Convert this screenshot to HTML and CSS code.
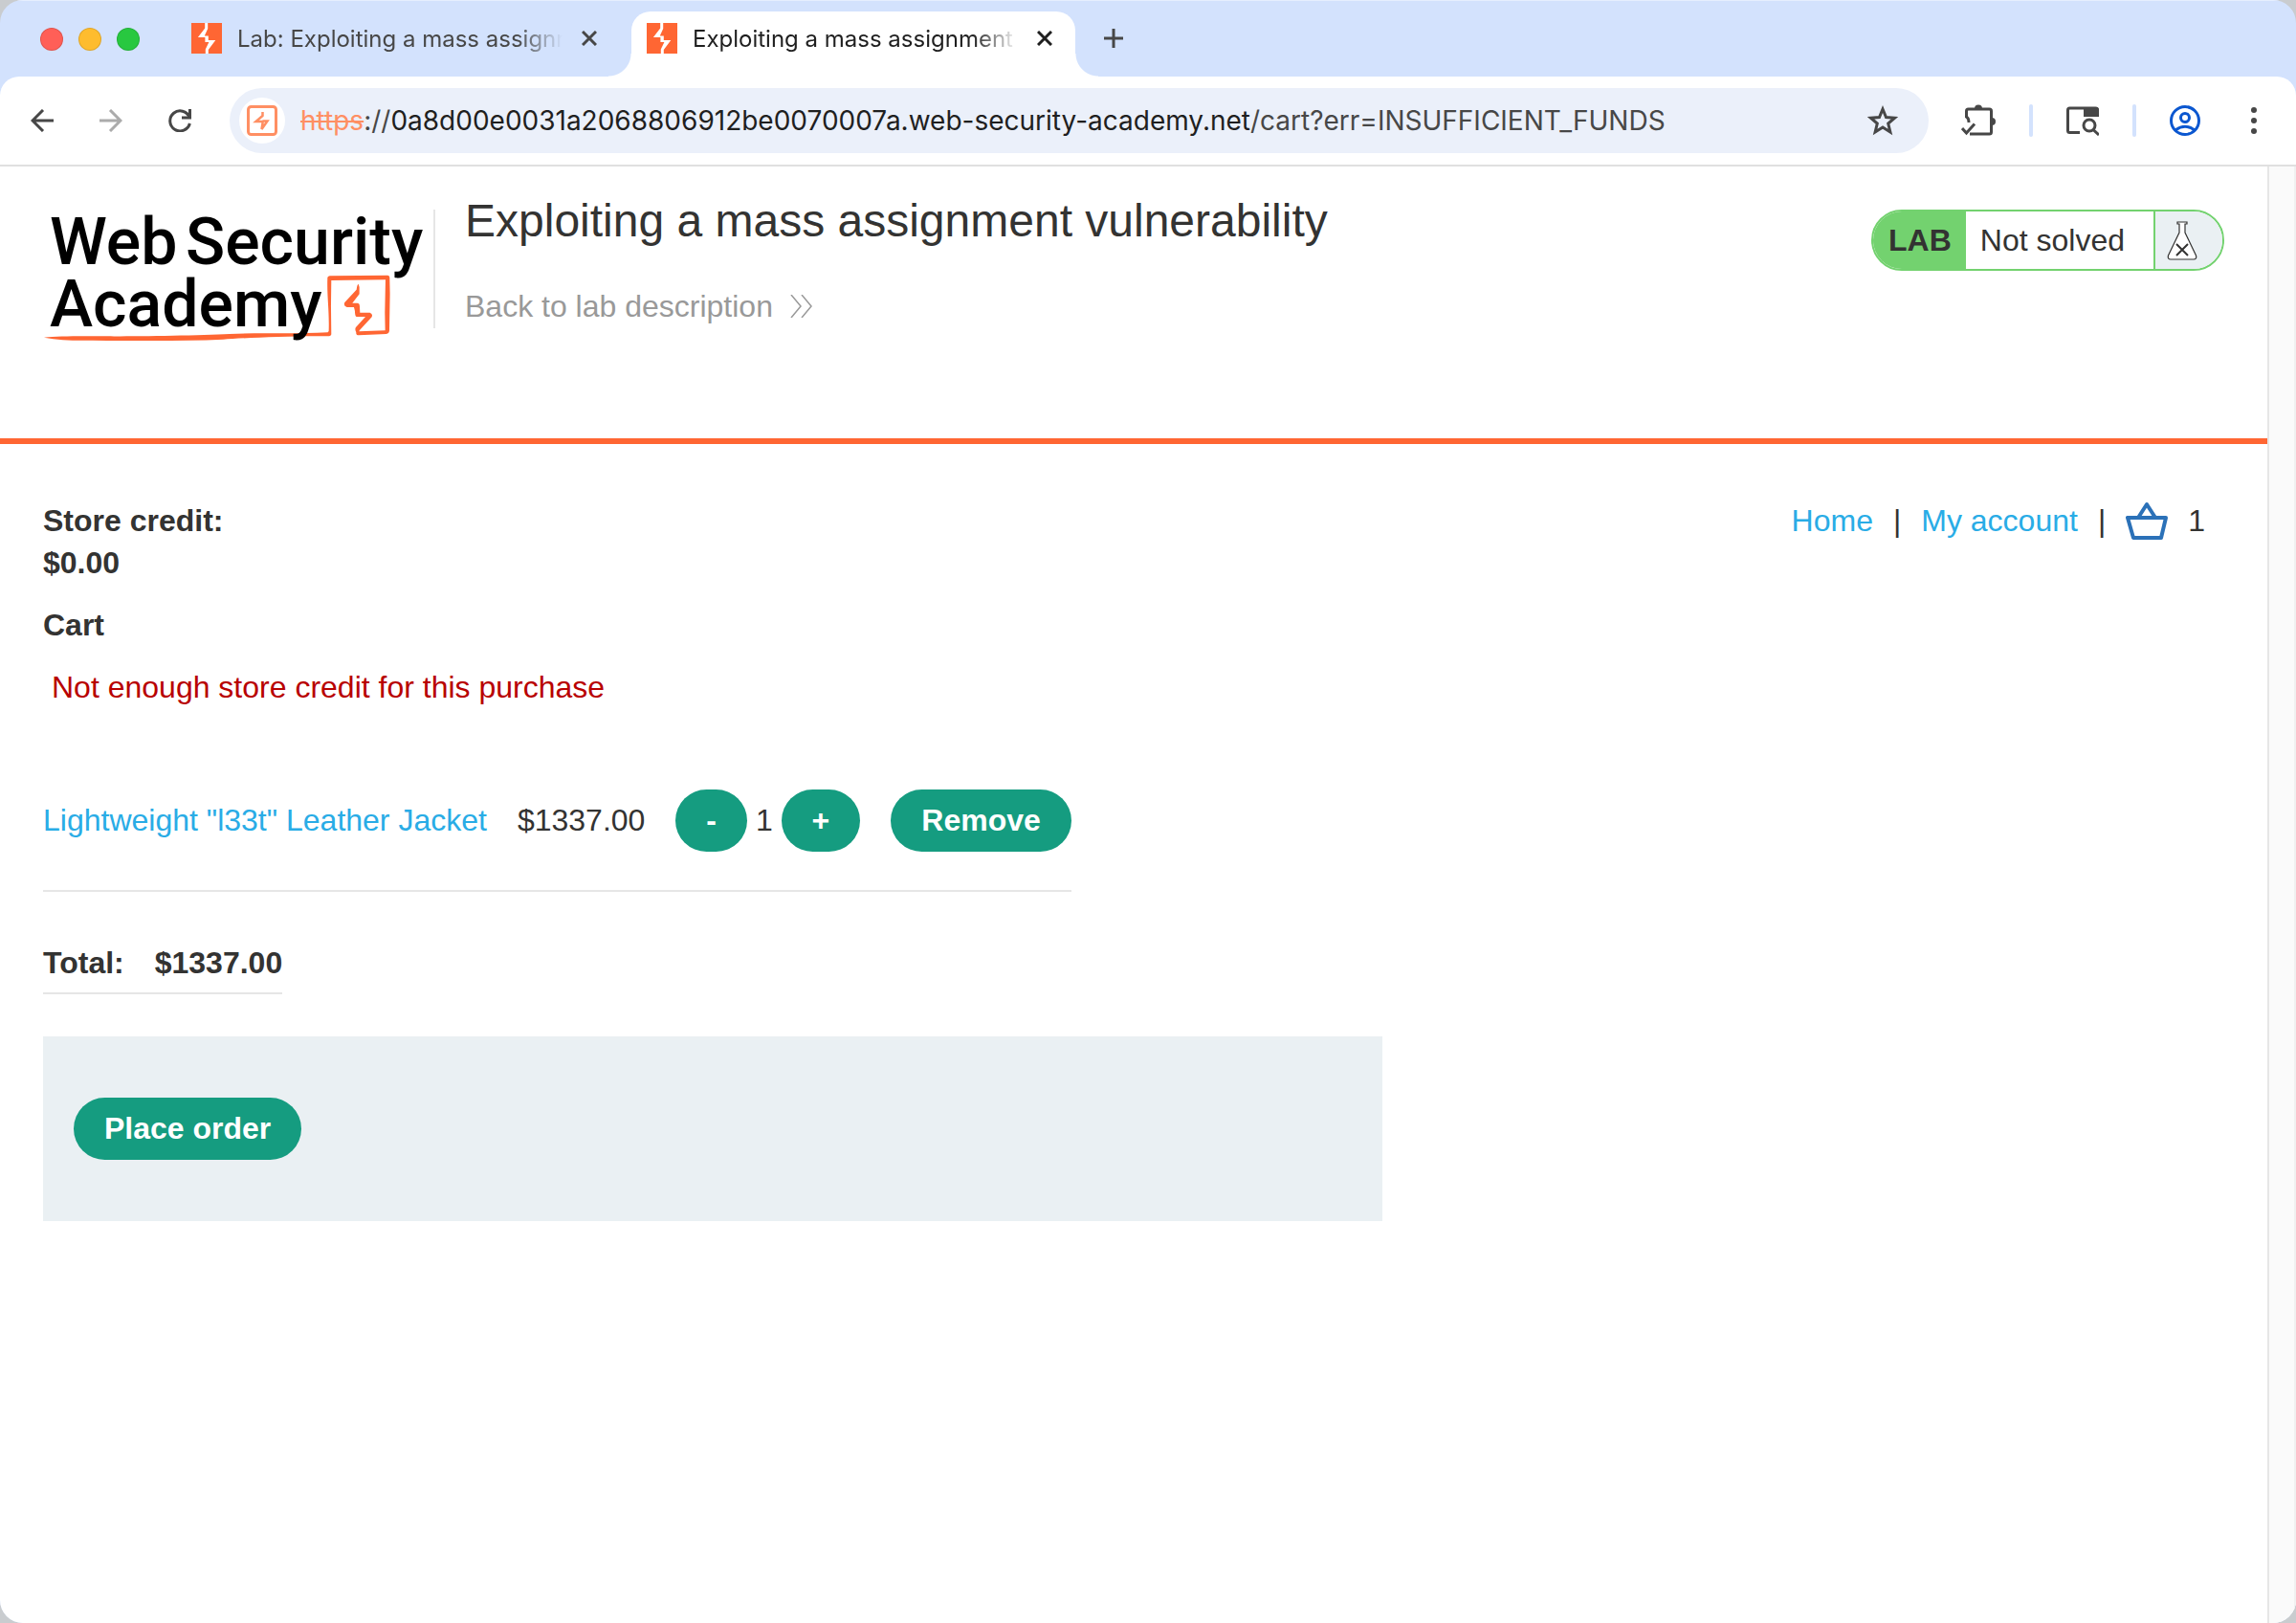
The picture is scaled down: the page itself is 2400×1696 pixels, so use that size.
FILE: index.html
```html
<!DOCTYPE html>
<html lang="en">
<head>
  <meta charset="UTF-8" />
  <meta name="viewport" content="width=device-width, initial-scale=1.0"/>
  <title>Exploiting a mass assignment vulnerability</title>
  <link rel="stylesheet" href="styles.css">
</head>
<body>
  <div class="window">
    <div class="tab-strip">
      <div class="lights">
        <span class="light red"></span>
        <span class="light yellow"></span>
        <span class="light green"></span>
      </div>

      <div class="tab">
        <svg class="favicon" viewBox="0 0 32 32">
          <rect width="32" height="32" fill="#ff6633"/>
          <path d="M14.200 0h3v6l-3.400 7.500h4v4.500h7.500l-7.500 10v4h-3v-4.500l3.600-7.500h-4v-5h-7.500l7.300-9.500z" fill="#fff"/>
        </svg>
        <span class="tab-title">Lab: Exploiting a mass assignm</span>
        <button class="tab-close" aria-label="Close tab">
          <svg width="16" height="16" viewBox="0 0 16 16"><path d="M1 1l14 14M15 1L1 15" stroke="currentColor" stroke-width="3"/></svg>
        </button>
      </div>

      <div class="tab active">
        <svg class="favicon" viewBox="0 0 32 32">
          <rect width="32" height="32" fill="#ff6633"/>
          <path d="M14.200 0h3v6l-3.400 7.500h4v4.500h7.500l-7.500 10v4h-3v-4.500l3.600-7.500h-4v-5h-7.500l7.300-9.500z" fill="#fff"/>
        </svg>
        <span class="tab-title">Exploiting a mass assignment</span>
        <button class="tab-close" aria-label="Close tab">
          <svg width="16" height="16" viewBox="0 0 16 16"><path d="M1 1l14 14M15 1L1 15" stroke="currentColor" stroke-width="3"/></svg>
        </button>
      </div>

      <button class="new-tab" aria-label="New tab">
        <svg width="20" height="20" viewBox="0 0 20 20"><path d="M10 0v20M0 10h20" stroke="currentColor" stroke-width="3"/></svg>
      </button>
    </div>

    <div class="toolbar">
      <div class="nav-buttons">
        <button aria-label="Back">
          <svg width="24" height="24" viewBox="0 0 24 24" fill="none" stroke="#474747" stroke-width="3"><path d="M24 12H2M13 1L2 12l11 11"/></svg>
        </button>
        <button aria-label="Forward" disabled>
          <svg width="24" height="24" viewBox="0 0 24 24" fill="none" stroke="#ababab" stroke-width="3"><path d="M0 12h22M11 1l11 11-11 11"/></svg>
        </button>
        <button aria-label="Reload">
          <svg width="24" height="24" viewBox="0 0 24 24" fill="none" stroke="#474747" stroke-width="3"><path d="M22 8.500A10.500 10.500 0 1 0 22.400 15"/><path d="M22.500 0v9H14"/></svg>
        </button>
      </div>

      <div class="address-bar">
        <span class="site-icon">
          <svg width="32" height="32" viewBox="0 0 32 32" fill="none" stroke="#ff8f63">
            <rect x="1.500" y="1.500" width="29" height="29" rx="3" stroke-width="3"/>
            <path d="M16.500 7v4l-7 6h7v2l-1 6 6-8.500h-5" stroke-width="2.500"/>
          </svg>
        </span>
        <span class="url"><s>https</s>://<b>0a8d00e0031a2068806912be0070007a.web-security-academy.net</b>/cart?err=INSUFFICIENT_FUNDS</span>
        <button aria-label="Bookmark this tab">
          <svg width="32" height="32" viewBox="0 0 32 32" fill="none" stroke="#474747" stroke-width="3"><path d="M16 4l3.500 8.500 9 .7-6.800 5.800 2.200 9-7.900-4.900L8.100 28l2.200-9-6.800-5.800 9-.7z"/></svg>
        </button>
      </div>

      <div class="tools">
        <button aria-label="Extensions">
          <svg width="36" height="34" viewBox="0 0 36 34" fill="none" stroke="#474747" stroke-width="3">
            <path d="M5.500 14V7q0-2 2-2h22q2 0 2 2v22q0 2-2 2H9"/>
            <path d="M5 13q3 1 3 6"/>
            <path d="M1 25l4.500 5L14 20.500"/>
            <path d="M14 4.500a4 4 0 0 1 8 0zM32 14a4 4 0 0 1 0 8z" fill="#474747" stroke="none"/>
          </svg>
        </button>
        <span class="separator"></span>
        <button aria-label="Search tabs">
          <svg width="34" height="32" viewBox="1 0 34 32" fill="none" stroke="#474747" stroke-width="3">
            <path d="M15 28.500H4.500q-2 0-2-2V5q0-2 2-2h27q2 0 2 2v6"/>
            <path d="M19 2h13q3 0 3 3v7H19z" fill="#474747" stroke="none"/>
            <circle cx="25" cy="21" r="6"/>
            <path d="M29 25.500l6 5.500"/>
          </svg>
        </button>
        <span class="separator"></span>
        <button aria-label="Profile">
          <svg width="32" height="32" viewBox="0 0 32 32" fill="none" stroke="#0b57d0" stroke-width="3">
            <circle cx="16" cy="16" r="14.500"/>
            <circle cx="16" cy="13" r="4.500"/>
            <path d="M6 26q10-7.500 20 0"/>
          </svg>
        </button>
        <button aria-label="Menu">
          <svg width="6" height="28" viewBox="0 0 6 28" fill="#474747"><circle cx="3" cy="3" r="3"/><circle cx="3" cy="14" r="3"/><circle cx="3" cy="25" r="3"/></svg>
        </button>
      </div>
    </div>

    <div class="viewport">
      <div class="page">
        <header class="lab-header">
          <div class="logo">
            <svg width="408" height="124" viewBox="0 0 408 124">
              <path transform="translate(-5 -9) scale(0.3333)" fill="#ff6633" d="M18 428C60 424 120 423 200 424S500 422 600 417 800 418 908 412L911 408C913 340 905 300 907 243Q906 236 914 235L1096 233Q1103 234 1102 243L1103 290 1101 408Q1100 416 1092 417L1005 421Q996 421 997 412 992 402 996 396L1026 363H998Q993 362 993 345L990 333H968Q956 330 961 318L998 278Q1000 262 1004 260L1007 270V292L985 320H1000Q1008 320 1008 330L1009 350H1040Q1050 354 1046 364L1008 405 1006 409 1088 406 1087 350 1089 247 919 249 918 330 919 418Q918 424 908 424C800 422 640 430 580 434 450 440 300 438 170 437Q90 440 18 428Z"/>
              <text x="7" y="57">Web</text>
              <text x="149" y="57">Security</text>
              <text x="7" y="122">Academy</text>
            </svg>
          </div>
          <div class="title-container">
            <h2>Exploiting a mass assignment vulnerability</h2>
            <a class="link-back" href="#">
              Back to lab description
              <svg width="24" height="24" viewBox="0 0 24 24" fill="none" stroke="#999" stroke-width="1.500"><path d="M1 0l10 12L1 24M12 0l10 12-10 12"/></svg>
            </a>
          </div>
          <div class="lab-status">
            <span class="lab-label">LAB</span>
            <p>Not solved</p>
            <span class="flask">
              <svg width="32" height="41" viewBox="0 0 32 41" stroke="#333332">
                <path d="M11 1h10v2h-2v9l11.500 24q1 4-2.500 4H4q-3.500 0-2.500-4L13 12V3h-2z" fill="#fff" stroke-width="1.200"/>
                <path d="M10 24l12 12M22 24L10 36" stroke-width="2"/>
              </svg>
            </span>
          </div>
        </header>

        <main class="cart-page">
          <div class="cart">
            <p class="strong">Store credit:<br>$0.00</p>
            <h1>Cart</h1>
            <p class="warning">Not enough store credit for this purchase</p>

            <table class="items">
              <tr>
                <td><a href="#">Lightweight "l33t" Leather Jacket</a></td>
                <td>$1337.00</td>
                <td><button class="button">-</button> 1 <button class="button">+</button></td>
                <td><button class="button">Remove</button></td>
              </tr>
            </table>

            <table class="total">
              <tr>
                <th>Total:</th>
                <th>$1337.00</th>
              </tr>
            </table>

            <form class="order-form">
              <button class="button" type="button">Place order</button>
            </form>
          </div>

          <nav class="top-links">
            <a href="#">Home</a>
            <span>|</span>
            <a href="#">My account</a>
            <span>|</span>
            <a href="#" aria-label="Cart">
              <svg width="44" height="40" viewBox="0 0 44 40" fill="none" stroke="#2b71b8" stroke-width="4" stroke-linejoin="round"><path d="M2 17h40l-5 21H8zM13 17l9-14 9 14"/></svg>
            </a>
            <span>1</span>
          </nav>
        </main>
      </div>
      <div class="scroll-track"></div>
    </div>
  </div>
</body>
</html>
```
FILE: styles.css
```css
* {
  box-sizing: border-box;
}

body {
  margin: 0;
  background: #c9cccf;
  font-family: "Liberation Sans", Arial, sans-serif;
  color: #333332;
}

h1, h2, p {
  margin: 0;
}

button {
  border: none;
  background: none;
  padding: 0;
  cursor: pointer;
}

svg {
  display: block;
}

.window {
  min-height: 100vh;
  display: flex;
  flex-direction: column;
  background: #d3e2fd;
  border-radius: 24px;
  overflow: hidden;
}

/* tabs */
.tab-strip {
  height: 80px;
  padding-top: 11px;
  display: flex;
  border-top: 1px solid #e6eefe;
  font-family: Inter, sans-serif;
  font-size: 24px;
}

.lights {
  display: flex;
  align-items: center;
  gap: 16px;
  height: 58px;
  padding-left: 42px;
}

.light {
  width: 24px;
  height: 24px;
  border-radius: 50%;
  border: 1px solid rgba(0, 0, 0, 0.12);
}

.red {
  background: #ff5f57;
}

.yellow {
  background: #febc2e;
}

.green {
  background: #28c840;
}

.tab {
  position: relative;
  display: flex;
  align-items: center;
  width: 464px;
  padding: 0 24px 12px 16px;
  color: #474747;
}

.lights + .tab {
  margin-left: 38px;
}

.tab + .tab {
  margin-left: 12px;
}

.active {
  background: #fff;
  border-radius: 20px 20px 0 0;
  color: #1f1f1f;
}

.active::before,
.active::after {
  content: "";
  position: absolute;
  bottom: 0;
  width: 24px;
  height: 24px;
}

.active::before {
  left: -24px;
  background: radial-gradient(circle at 0 0, transparent 23px, #fff 24px);
}

.active::after {
  right: -24px;
  background: radial-gradient(circle at 100% 0, transparent 23px, #fff 24px);
}

.favicon {
  width: 32px;
  height: 32px;
  flex: none;
}

.tab-title {
  flex: 1;
  margin: 0 20px 0 16px;
  overflow: hidden;
  white-space: nowrap;
  -webkit-mask-image: linear-gradient(to right, #000 86%, transparent);
  mask-image: linear-gradient(to right, #000 86%, transparent);
}

.tab-close {
  color: inherit;
}

.new-tab {
  height: 56px;
  margin-left: 30px;
  color: #474747;
}

/* toolbar */
.toolbar {
  display: flex;
  align-items: center;
  height: 94px;
  padding: 0 41px 0 32px;
  background: #fff;
  border-bottom: 2px solid #e0e0e0;
  border-radius: 20px 20px 0 0;
}

.nav-buttons {
  display: flex;
  gap: 48px;
}

.address-bar {
  flex: 1;
  display: flex;
  align-items: center;
  height: 68px;
  margin-left: 40px;
  padding: 0 32px 0 10px;
  background: #ebf0fa;
  border-radius: 34px;
  font-family: Inter, sans-serif;
  font-size: 28px;
  color: #474747;
}

.site-icon {
  padding: 8px;
  background: #fff;
  border-radius: 50%;
}

.url {
  flex: 1;
  margin-left: 16px;
  white-space: nowrap;
}

.url s {
  color: #ff8f63;
}

.url b {
  font-weight: normal;
  color: #1f1f1f;
}

.tools {
  display: flex;
  align-items: center;
  gap: 35px;
  margin-left: 34px;
}

.tools button:last-child {
  margin-left: 18px;
}

.separator {
  width: 4px;
  height: 34px;
  border-radius: 2px;
  background: #d3e2fd;
}

/* page */
.viewport {
  flex: 1;
  display: flex;
  background: #fff;
}

.page {
  flex: 1;
  font-size: 32px;
  line-height: 44px;
}

.scroll-track {
  width: 30px;
  background: #fafafa;
  border-left: 2px solid #e6e6e6;
  border-right: 2px solid #f0f0f0;
}

a {
  color: #29ace6;
  text-decoration: none;
}

.lab-header {
  display: flex;
  align-items: flex-start;
  padding: 33px 45px 115px;
  border-bottom: 6px solid #ff6633;
}

.logo {
  margin-top: 12px;
  border-right: 2px solid #e6e6e6;
}

.logo svg {
  overflow: visible;
  font-family: Roboto, sans-serif;
  font-size: 68px;
  font-weight: 500;
}

.title-container {
  flex: 1;
  padding-left: 31px;
}

.title-container h2 {
  font-size: 48px;
  line-height: 48px;
  font-weight: normal;
}

.link-back {
  display: flex;
  align-items: center;
  gap: 18px;
  margin-top: 47px;
  line-height: 36px;
  color: #999;
}

.lab-status {
  display: flex;
  height: 64px;
  margin-top: 12px;
  border: 2px solid #73d26f;
  border-radius: 32px;
  overflow: hidden;
  line-height: 60px;
}

.lab-label {
  padding: 0 15px 0 16px;
  background: #73d26f;
  font-weight: bold;
}

.lab-status p {
  padding: 0 30px 0 15px;
}

.flask {
  padding: 10px 26px 0 12px;
  background: #eaf0f3;
  border-left: 2px solid #73d26f;
}

.cart-page {
  display: flex;
  align-items: flex-start;
  justify-content: space-between;
  padding: 58px 45px;
}

.cart {
  flex: 0 1 1400px;
}

.strong,
.cart h1 {
  font-size: 32px;
  font-weight: bold;
}

.cart h1,
.warning {
  margin-top: 21px;
}

.warning {
  padding-left: 9px;
  color: #b80000;
}

table {
  border-spacing: 0;
}

.items {
  margin-top: 85px;
  border-bottom: 2px solid #e6e6e6;
}

td {
  padding: 0 32px 40px 0;
  vertical-align: baseline;
}

th {
  padding: 0 32px 9px 0;
  text-align: left;
}

td:last-child,
th:last-child {
  padding-right: 0;
}

.total {
  margin-top: 52px;
  border-bottom: 2px solid #e6e6e6;
}

.button {
  padding: 14px 32px;
  border-radius: 33px;
  background: #159c80;
  color: #fff;
  font-family: inherit;
  font-size: 32px;
  font-weight: bold;
  line-height: 37px;
}

.order-form {
  margin-top: 44px;
  padding: 64px 32px;
  background: #eaf0f3;
}

.order-form .button {
  display: block;
}

.top-links {
  display: flex;
  align-items: center;
  gap: 21px;
  padding-right: 20px;
}
```
